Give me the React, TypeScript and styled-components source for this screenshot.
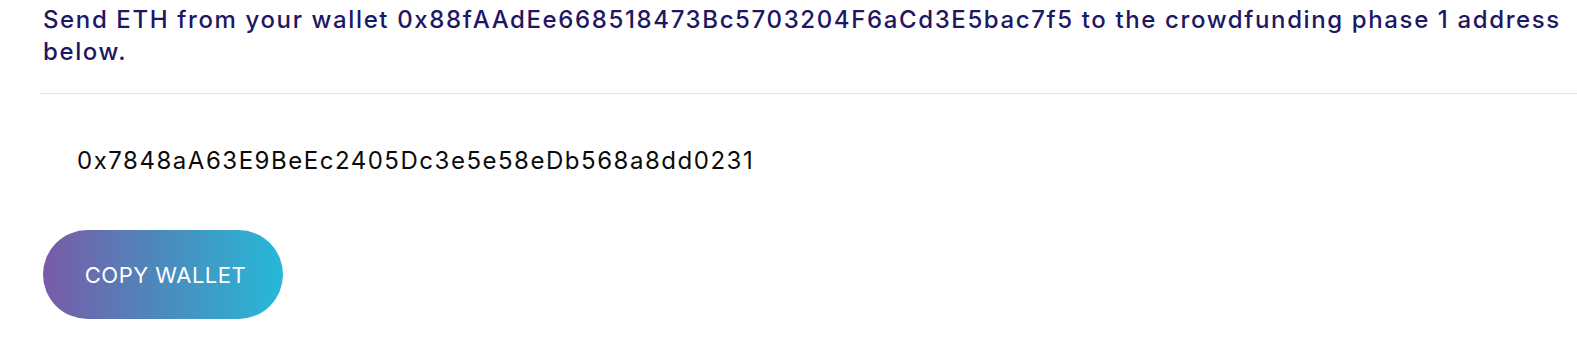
import React from "react";
import styled, { createGlobalStyle } from "styled-components";

const GlobalStyle = createGlobalStyle`
  html, body {
    margin: 0;
    padding: 0;
    background: #ffffff;
  }
  body {
    font-family: Inter, "DejaVu Sans", sans-serif;
  }
`;

const Page = styled.main`
  display: flex;
  flex-direction: column;
  align-items: flex-start;
  padding: 4px 0 0 43px;
`;

const Heading = styled.p`
  margin: 0;
  width: 100%;
  box-sizing: border-box;
  padding-right: 6px;
  font-size: 24px;
  font-weight: 500;
  line-height: 32px;
  letter-spacing: 1.62px;
  color: #1e1764;
`;

const Divider = styled.hr`
  align-self: stretch;
  margin: 25px 0 0 -3px;
  border: 0;
  height: 1px;
  background: #e4e4e4;
`;

const Address = styled.div`
  margin-top: 51px;
  padding-left: 34px;
  font-size: 24px;
  line-height: 32px;
  letter-spacing: 1.52px;
  color: #0b0b0b;
`;

const CopyButton = styled.button`
  margin-top: 53px;
  width: 240px;
  height: 89px;
  padding: 0 0 0 5px;
  border: 0;
  border-radius: 45px;
  background: linear-gradient(90deg, #7a5aa7 0%, #4f86bb 45%, #26b9d7 100%);
  color: #ffffff;
  font-family: Inter, "DejaVu Sans", sans-serif;
  font-size: 22px;
  letter-spacing: 0.5px;
  text-transform: uppercase;
  cursor: pointer;
`;

export default function App() {
  return (
    <>
      <GlobalStyle />
      <Page>
        <Heading>
          Send ETH from your wallet 0x88fAAdEe668518473Bc5703204F6aCd3E5bac7f5 to the crowdfunding phase 1 address below.
        </Heading>
        <Divider />
        <Address>0x7848aA63E9BeEc2405Dc3e5e58eDb568a8dd0231</Address>
        <CopyButton>Copy Wallet</CopyButton>
      </Page>
    </>
  );
}
